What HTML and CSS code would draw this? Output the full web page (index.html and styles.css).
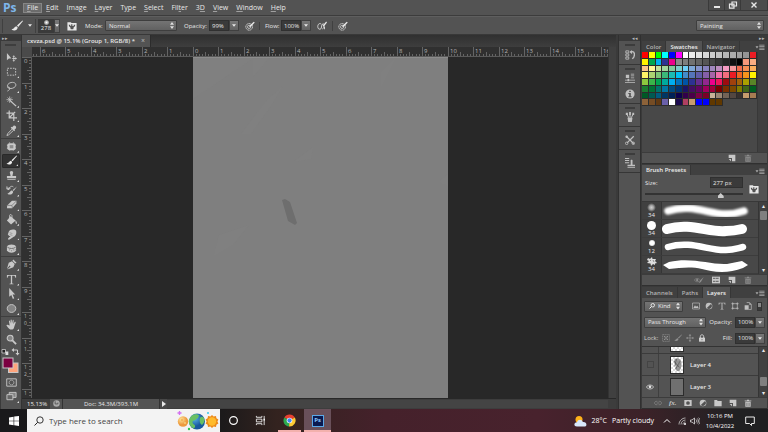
FILE: index.html
```html
<!DOCTYPE html>
<html lang="en">
<head>
<meta charset="utf-8">
<title>cxvza.psd</title>
<link rel="stylesheet" href="styles.css">
</head>
<body>
<svg class="sprite" aria-hidden="true">
  <symbol id="brush" viewBox="0 0 12 12"><path d="M11.5.6 6 5.6 7.2 6.9 12 1zM5.4 6.2C3.6 6.4 3.4 8.600.5 9.400 3 11.400 6.300 10.500 6.700 7.500z"/></symbol>
  <symbol id="pressure" viewBox="0 0 12 12"><circle cx="5" cy="7" r="4" fill="none" stroke="currentColor" stroke-dasharray="1.500 .5"/><circle cx="5" cy="7" r="2" fill="none" stroke="currentColor" stroke-width=".8"/><path d="m5 7.500.6-2L10.500.8l1.200 1.100L7 6.800z"/></symbol>
  <symbol id="airbrush" viewBox="0 0 12 12"><path d="M5 3.500C2 2 .6 5 1 7.500c.3 2.500 2.500 3 4 1.500M5 9l1-5 2.500-.5M6.500 9.500C8 9 8.500 7.500 8.500 5.500" fill="none" stroke="currentColor"/><path d="m7 5.500 4-4.800 1 1L8 6.800zM8.500 7h1v3h-1z"/></symbol>
  <symbol id="folderbrush" viewBox="0 0 12 12"><path fill-rule="evenodd" d="M.5 1.500h4l1 1h6v9h-11zM2 4.500h2V6h1V3.800h1.500V6H8V4.500h2L9.300 7h-1l-.8 3h-3l-.8-3h-1z"/></symbol>
  <symbol id="move" viewBox="0 0 12 12"><path d="M1 1v8l2.200-2H6zM8.500 3.500 10 5.200H9v1.300h1.200v-1L12 7l-1.800 1.500v-1H9V9h1l-1.500 1.700L7 9h1V7.500H6.800v-1H8V5.200H7z"/></symbol>
  <symbol id="marquee" viewBox="0 0 12 12"><path d="M1.500 2.500h9v7.500h-9z" fill="none" stroke="currentColor" stroke-dasharray="1.800 1.200"/></symbol>
  <symbol id="lasso" viewBox="0 0 12 12"><path d="M3 8C-.5 5 3 1.500 7 1.500S12 5 9 7C7 8.500 3.500 8.500 2.500 7.500S3.500 6 4 7.500 3.500 10 1.500 11" fill="none" stroke="currentColor"/></symbol>
  <symbol id="wand" viewBox="0 0 12 12"><path d="m5 4.500 6.500 6-1 1L4 5.500z"/><path d="M4 .5v7M.5 4h7M1.700 1.700l4.600 4.600M6.300 1.700 1.700 6.300" stroke="currentColor" stroke-width=".8"/></symbol>
  <symbol id="crop" viewBox="0 0 12 12"><path d="M3.500.5v8H12M.5 3.500h8V12M3.500 8.500 10 2" fill="none" stroke="currentColor" stroke-width="1.300"/></symbol>
  <symbol id="eyedrop" viewBox="0 0 12 12"><path d="M8 1c1.500-1.500 4 1 2.700 2.700L9.300 5l.6.7-1 1-3.800-3.800 1-1 .6.6z"/><path d="m6.500 4.500-4.700 5-.8 2 2-.8 5-4.700" fill="none" stroke="currentColor"/></symbol>
  <symbol id="heal" viewBox="0 0 12 12"><rect x="1.500" y="2.500" width="9" height="7.500" rx="2"/><path d="M1 4.500h10M1 7.800h10M4 1.500v9M8 1.500v9" stroke="currentColor" stroke-dasharray="1 .7"/><path d="M4 4.500h4v3.500H4z" fill="#8b8b8b"/></symbol>
  <symbol id="stamp" viewBox="0 0 12 12"><path d="M4.500 4C2.500 0 9.500 0 7.500 4L7 6.500h4V9H1V6.500h4zM1.500 10h9v1h-9z"/></symbol>
  <symbol id="history" viewBox="0 0 12 12"><path d="M12 1.500 7.300 5.500l1 1zM6.700 6C4.500 6 4.500 8.500 1.500 9.500 4.500 11.500 7.500 10 7.800 7.300z"/><path d="M1 3.500h4M2.500 5.500C4 1 6.500 1 8 2M1 1.500v3h3" fill="none" stroke="currentColor"/></symbol>
  <symbol id="eraser" viewBox="0 0 12 12"><path d="M6.500 2h5l-.2 3-4.500 5H1l.3-3z"/><path d="M1.300 7h5.200L7 10m-.5-3 5-5" fill="none" stroke="#666" stroke-width=".7"/></symbol>
  <symbol id="bucket" viewBox="0 0 12 12"><path d="M5 2.500 10.500 7l-5 4.500L1 7zM10.500 7c2 1.500 1.300 4 .8 4s-1.300-1.500-.8-4z"/><path d="M4 6V1.500c0-1.500 3-1 2.500 1V5" fill="none" stroke="currentColor"/></symbol>
  <symbol id="smudge" viewBox="0 0 12 12"><path d="M3 3C4 0 10 0 11 2c.8 3-.5 6-2.500 6.500L4 11.500C2 12 1.500 10.500 3 9.500l2-2H3.500L2 6z"/><path d="m4 4 3 1M4 6l3 1" stroke="#777" stroke-width=".6"/></symbol>
  <symbol id="sponge" viewBox="0 0 12 12"><path d="M1 4c1-3 9-3 10 0v4c-1 3.500-9 3.500-10 0z"/><path d="M1.500 4.500c2 2 7 2 9 0" fill="none" stroke="#686868"/><path d="M4 7v1M6 8v1M8 7v1M10 7v1" stroke="#777"/></symbol>
  <symbol id="pen" viewBox="0 0 12 12"><path d="m8 .5 3.500 3.500-1.500 1L7 2zM6.500 2.500l3 3L8 9l-6.500 2.500L5 8 4 7l-3 4L3 4z"/></symbol>
  <symbol id="type" viewBox="0 0 12 12"><path d="M1 1h10v3h-.8C10 2.500 9.500 2 8 2H6.700v7.500c0 .8.300 1 1.500 1v.7H3.800v-.7c1.200 0 1.500-.2 1.500-1V2H4C2.500 2 2 2.500 1.800 4H1z"/></symbol>
  <symbol id="arrow" viewBox="0 0 12 12"><path d="M3.500 0v9.500l2.300-2L7.500 12l1.500-.7L7.200 7H10z"/></symbol>
  <symbol id="ellipse" viewBox="0 0 12 12"><ellipse cx="6" cy="6" rx="4.700" ry="4.300" fill="#858585" stroke="currentColor"/></symbol>
  <symbol id="hand" viewBox="0 0 12 12"><path d="m4 7-.8-4.500c0-1 1-1 1.200 0L5 5 5 1.300c0-1 1.200-1 1.300 0L6.500 5l.8-3.500c.2-1 1.200-.7 1.100.3L8 5.500l1.500-2.300c.6-.7 1.400 0 1 .8L9 8.500C8.500 11 7.500 11.500 6 11.500c-2 0-3-1-5.500-4.500 0-1 1-1 1.800-.5z"/></symbol>
  <symbol id="zoom" viewBox="0 0 12 12"><circle cx="4.500" cy="4.500" r="3.200" fill="#858585" stroke="currentColor" stroke-width="1.200"/><path d="m7 7 4 4" stroke="currentColor" stroke-width="2"/></symbol>
  <symbol id="mask" viewBox="0 0 12 12"><path d="M.8 2h10.400v8H.8z" fill="none" stroke="currentColor"/><circle cx="6" cy="6" r="2.600" fill="none" stroke="currentColor" stroke-dasharray="1.300 .5"/></symbol>
  <symbol id="screen" viewBox="0 0 12 12"><path d="M3.500 1.500H11V7H3.500z" fill="#858585" stroke="currentColor"/><path d="M1 4h6.500v5.500H1z" fill="#666" stroke="currentColor"/></symbol>
  <symbol id="actions" viewBox="0 0 12 12"><path d="M1 1h3.500v2.500H1zM1 4.700h3.500v2.500H1zM1 8.500h3.500V11H1z" fill="none" stroke="currentColor"/><path d="M6.500 2h2.200c3.500 0 3.500 6 0 8.500" fill="none" stroke="currentColor" stroke-width="1.600"/><path d="M8.500 0v5L5.500 2.300z"/></symbol>
  <symbol id="props" viewBox="0 0 12 12"><path d="M1 2h4v4H1zM7 .8h4v1H7zM7 3h4v1H7zM7 5.300h4v1H7zM0 8h12v1H0zM3 7h2v3H3zM0 10.800h12v1H0z"/></symbol>
  <symbol id="info" viewBox="0 0 12 12"><circle cx="6" cy="6" r="5.500"/><path d="M5 2h2v1.700H5zM4 4.800h3v4h1v1H4v-1h1V6H4z" fill="#535353"/></symbol>
  <symbol id="cup" viewBox="0 0 12 12"><path d="M3 7h6l-.8 5H3.800z"/><path d="M4.500 7 2 2M6 7V.5M7.500 7 10 2" stroke="currentColor" stroke-width="1.200"/><path d="M1 1h2.500v2.500H1zM5 0h2v3.500H5zM8.800 1H11v2.500H8.800z"/></symbol>
  <symbol id="tools" viewBox="0 0 12 12"><path d="m1.500 1.500 9 9m-8-1 8-8" stroke="currentColor" stroke-width="1.500"/><circle cx="2" cy="2" r="1.500"/><circle cx="2" cy="10" r="1.500" fill="none" stroke="currentColor"/><circle cx="10" cy="10" r="1.500" fill="none" stroke="currentColor"/></symbol>
  <symbol id="stamps" viewBox="0 0 12 12"><path d="M0 0h5v1.200H0zM0 2.500h5v1.200H0zM0 5h5v1.200H0zM6.800 4c-1-2.500 3.200-2.500 2.200 0v4H12v2H3V8h3.800zM3 11h9v1H3z"/></symbol>
  <symbol id="new" viewBox="0 0 12 12"><path fill-rule="evenodd" d="M1 1h10v10H6V6H1zM1 7.500h3.500V11z"/></symbol>
  <symbol id="trash" viewBox="0 0 12 12"><path d="M1 2.200h3.500V1h3v1.200H11v1.300H1zM2 4.300h8v7.200H2z"/><path d="M4 5.500v5M6 5.500v5M8 5.500v5" stroke="#535353" stroke-width=".7"/></symbol>
  <symbol id="eye" viewBox="0 0 12 12"><path d="M.5 6C3 2 9 2 11.500 6 9 10 3 10 .5 6z" fill="none" stroke="currentColor"/><circle cx="6" cy="5.800" r="2"/></symbol>
  <symbol id="eyebrush" viewBox="0 0 16 12"><path d="M.5 6C3 3 6 3 9 5M.5 6C3 9 5 9.500 8 8" fill="none" stroke="currentColor"/><circle cx="5" cy="6" r="1.800"/><path d="M15.500 1 10 6.500 7 11l4-2z"/></symbol>
  <symbol id="grid" viewBox="0 0 12 12"><path d="M0 1h12v10H0z"/><path d="M2 3.500h3M6.500 3.500H10M2 8h3M6.500 8H10" stroke="#484848" stroke-width="2" stroke-dasharray="1.300 .5"/></symbol>
  <symbol id="image" viewBox="0 0 12 12"><path d="M.8 1.500h10.400v9H.8z" fill="none" stroke="currentColor"/><path d="m2 9 2.500-4L6 7l2-1.500L10 9z"/></symbol>
  <symbol id="adjust" viewBox="0 0 12 12"><circle cx="6" cy="6" r="5"/><path d="M2.700 9A4.200 4.200 0 0 0 9 3z" fill="#535353"/></symbol>
  <symbol id="shape" viewBox="0 0 12 12"><path d="M2.500 2.500h7v7h-7zM.5 2.500H4M2.500.5V4M8 2.500h3.500M9.500.5V4M.5 9.500H4M2.500 8v3.500M8 9.500h3.500M9.500 8v3.500" fill="none" stroke="currentColor"/></symbol>
  <symbol id="smart" viewBox="0 0 12 12"><path d="M4 .8h4.500L11 3.500v7.700H7" fill="none" stroke="currentColor"/><path d="M1 5h6v6.500H1zM8 1v3h3z"/></symbol>
  <symbol id="checker" viewBox="0 0 12 12"><path d="M1 1h10v10H1z" fill="none" stroke="currentColor" stroke-dasharray="2 .8"/><path d="M3 3h2v2H3zM7 3h2v2H7zM5 5h2v2H5zM3 7h2v2H3zM7 7h2v2H7z"/></symbol>
  <symbol id="cross" viewBox="0 0 12 12"><path d="M6 1v10M1 6h10" stroke="currentColor"/><path d="m6 0 2 2.500H4zM6 12l2-2.500H4zM0 6l2.500-2v4zM12 6 9.500 4v4z"/></symbol>
  <symbol id="lock" viewBox="0 0 12 12"><path d="M1.500 5.500h9v6h-9z"/><path d="M3.500 6V3.500c0-3 5-3 5 0V6" fill="none" stroke="currentColor" stroke-width="1.500"/><path d="M5.500 7.500h1v2h-1z" fill="#555"/></symbol>
  <symbol id="link" viewBox="0 0 12 12"><path d="M5 3.500H3.500c-3.500 0-3.500 5 0 5H5M7 3.500h1.500c3.500 0 3.500 5 0 5H7M4 6h4" fill="none" stroke="currentColor"/></symbol>
  <symbol id="layermask" viewBox="0 0 12 12"><path fill-rule="evenodd" d="M.5 1.500h11v9H.5zM6 3.200a2.800 2.800 0 1 0 0 5.600 2.800 2.800 0 1 0 0-5.600z"/></symbol>
  <symbol id="folder" viewBox="0 0 12 12"><path d="M.5 1.500h4l1 1.500h6v8H.5z"/></symbol>
  <symbol id="search" viewBox="0 0 12 12"><circle cx="7.500" cy="4.500" r="3.500" fill="none" stroke="currentColor" stroke-width="1.800"/><path d="M5 7 1 11" stroke="currentColor" stroke-width="2"/></symbol>
  <symbol id="menu" viewBox="0 0 12 8"><path d="M0 3h4L2 6zM5 1h7v1H5zM5 3h7v1H5zM5 5h7v1H5zM5 7h7v1H5z"/></symbol>
  <symbol id="down" viewBox="0 0 6 4"><path d="M0 0h6L3 4z"/></symbol>
</svg>

<div class="app">
  <header class="menubar">
    <span class="logo">Ps</span>
    <nav class="menus">
      <button class="menu active"><u>F</u>ile</button><button class="menu"><u>E</u>dit</button><button class="menu"><u>I</u>mage</button><button class="menu"><u>L</u>ayer</button><button class="menu">T<u>y</u>pe</button><button class="menu"><u>S</u>elect</button><button class="menu">Fil<u>t</u>er</button><button class="menu">3<u>D</u></button><button class="menu"><u>V</u>iew</button><button class="menu"><u>W</u>indow</button><button class="menu"><u>H</u>elp</button>
    </nav>
    <div class="winctl">
      <button aria-label="Minimize"><svg viewBox="0 0 10 8"><path d="M2 5h6v2H2z"/></svg></button>
      <button aria-label="Restore"><svg viewBox="0 0 10 8"><path d="M4 1h4.500v4H4zM1.500 3.200H6v4H1.500z" fill="none" stroke="currentColor" stroke-width="1.200"/></svg></button>
      <button aria-label="Close"><svg viewBox="0 0 10 8"><path d="m2.500 1.500 5 5m0-5-5 5" stroke="currentColor" stroke-width="1.400"/></svg></button>
    </div>
  </header>

  <div class="options">
    <button class="toolbtn" aria-label="Brush tool"><svg class="ico12"><use href="#brush"/></svg><svg class="caret"><use href="#down"/></svg></button>
    <div class="preset"><span class="dot"></span><span>278</span></div><button class="drop preset-drop" aria-label="Brush preset picker"><svg class="caret"><use href="#down"/></svg></button>
    <button class="bare" aria-label="Brush panel"><svg class="ico10"><use href="#folderbrush"/></svg></button>
    <label class="mode-label" for="mode">Mode:</label>
    <span class="pick mode"><select id="mode"><option>Normal</option></select></span>
    <label class="opacity-label" for="opacity">Opacity:</label>
    <input class="num" id="opacity" value="99%"><button class="drop" aria-label="Opacity slider"><svg class="caret"><use href="#down"/></svg></button>
    <button class="bare press" aria-label="Pressure for opacity"><svg class="ico10"><use href="#pressure"/></svg></button>
    <label class="flow-label" for="flow">Flow:</label>
    <input class="num" id="flow" value="100%"><button class="drop" aria-label="Flow slider"><svg class="caret"><use href="#down"/></svg></button>
    <button class="bare press" aria-label="Airbrush"><svg class="ico10"><use href="#airbrush"/></svg></button>
    <button class="bare size-press" aria-label="Pressure for size"><svg class="ico10"><use href="#pressure"/></svg></button>
    <span class="pick workspace-pick"><select aria-label="Workspace"><option>Painting</option></select></span>
  </div>

  <main class="workspace">
    <aside class="toolbox">
      <div class="collapse">▸▸</div>
      <div class="tools">
        <div class="grip"></div>
        <div class="group six"><button aria-label="Move"><svg><use href="#move"/></svg></button><button class="more" aria-label="Marquee"><svg><use href="#marquee"/></svg></button><button class="more" aria-label="Lasso"><svg><use href="#lasso"/></svg></button><button class="more" aria-label="Magic wand"><svg><use href="#wand"/></svg></button><button class="more" aria-label="Crop"><svg><use href="#crop"/></svg></button><button class="more" aria-label="Eyedropper"><svg><use href="#eyedrop"/></svg></button></div>
        <div class="group eight"><button class="more" aria-label="Heal"><svg><use href="#heal"/></svg></button><button class="more selected" aria-label="Brush"><svg><use href="#brush"/></svg></button><button class="more" aria-label="Stamp"><svg><use href="#stamp"/></svg></button><button class="more" aria-label="History brush"><svg><use href="#history"/></svg></button><button class="more" aria-label="Eraser"><svg><use href="#eraser"/></svg></button><button class="more" aria-label="Paint bucket"><svg><use href="#bucket"/></svg></button><button class="more" aria-label="Smudge"><svg><use href="#smudge"/></svg></button><button class="more" aria-label="Sponge"><svg><use href="#sponge"/></svg></button></div>
        <div class="group four"><button class="more" aria-label="Pen"><svg><use href="#pen"/></svg></button><button class="more" aria-label="Type"><svg><use href="#type"/></svg></button><button class="more" aria-label="Path selection"><svg><use href="#arrow"/></svg></button><button class="more" aria-label="Ellipse"><svg><use href="#ellipse"/></svg></button></div>
        <div class="group two"><button class="more" aria-label="Hand"><svg><use href="#hand"/></svg></button><button aria-label="Zoom"><svg><use href="#zoom"/></svg></button></div>
        <svg class="colors" viewBox="0 0 20 28">
          <path d="M1 2.500h3.500V6H1z" fill="#222" stroke="#ccc" stroke-width=".8"/><path d="M4.500 4.500h2.800V8H4.500z" fill="#ddd"/>
          <path d="M12.500 3h4v4" fill="none" stroke="#ccc"/><path d="m13 1v4l-2.500-2zM14.500 6h4l-2 2.500z" fill="#ccc"/>
          <rect x="7.500" y="16" width="9.500" height="9.500" fill="#ffa47c" stroke="#c8c8c8"/>
          <rect x="2" y="11" width="10" height="10" fill="#7b0040" stroke="#c8c8c8"/>
        </svg>
        <div class="group last"><button aria-label="Quick mask"><svg><use href="#mask"/></svg></button><button class="more" aria-label="Screen mode"><svg><use href="#screen"/></svg></button></div>
      </div>
    </aside>

    <section class="document">
      <div class="doctabs"><button class="doctab">cxvza.psd @ 15.1% (Group 1, RGB/8) * <span class="x">×</span></button></div>
      <div class="view">
        <div class="corner"></div>
        <svg class="ruler top" id="ruler-top"></svg>
        <svg class="ruler left" id="ruler-left"></svg>
        <div class="pasteboard" id="pasteboard">
          <svg class="canvas" id="canvas" viewBox="0 0 255 341" preserveAspectRatio="none">
            <path d="M0 0h255v341H0z" fill="#7f7f7f"/>
            <path d="M0 42 62 0H0zM60 20l17-20-17 2zM48 77l24-32 18-16-12 20-20 28zM188 30l15-30-15 15zM245 125l10-8v12zM26 178l30-10-16 20-20 12zM100 105l20-15-2 12z" fill="#828282" opacity=".5"/>
            <path d="m89 143 3-1 5 3 7 21-2 2-7-4z" fill="#6e6e6e"/>
            <path d="M0 .5h255" stroke="#8c8c8c"/>
          </svg>
        </div>
        <div class="vscroll"></div>
      </div>
      <footer class="status"><span class="pct">15.13%</span><span class="stico"><svg viewBox="0 0 10 10"><circle cx="5" cy="5" r="3.600"/><path d="M3.500 2.500v3h3V4" fill="none" stroke="#555"/></svg></span><span class="docsize">Doc: 34.3M/393.1M</span><button class="play" aria-label="Status menu"><svg viewBox="0 0 6 6"><path d="M1 0v6l4-3z"/></svg></button><span class="track"></span></footer>
    </section>

    <aside class="dock">
      <div class="collapse right">◂◂</div>
      <div class="dockgroup one"><button aria-label="History"><svg><use href="#actions"/></svg></button></div>
      <div class="dockgroup pair"><button aria-label="Properties"><svg><use href="#props"/></svg></button><button aria-label="Info"><svg><use href="#info"/></svg></button></div>
      <div class="dockgroup"><button aria-label="Brush"><svg><use href="#cup"/></svg></button></div>
      <div class="dockgroup"><button aria-label="Tool presets"><svg><use href="#tools"/></svg></button></div>
      <div class="dockgroup"><button aria-label="Clone source"><svg><use href="#stamps"/></svg></button></div>
      <div class="dockrest"></div>
    </aside>

    <aside class="panels">
      <div class="collapse right">▸▸</div>
      <section class="panel swatch-panel">
        <div class="tabs"><button>Color</button><button class="on">Swatches</button><button>Navigator</button><svg class="pm"><use href="#menu"/></svg></div>
        <div class="swatch-body"><div class="swatches" id="swatches"></div><div class="bar"></div></div>
        <div class="foot"><svg class="ico8"><use href="#new"/></svg><svg class="ico8 dim"><use href="#trash"/></svg></div>
      </section>
      <section class="panel brush-panel">
        <div class="tabs"><button class="on">Brush Presets</button><svg class="pm"><use href="#menu"/></svg></div>
        <div class="size">
          <label for="size">Size:</label><input class="num" id="size" value="277 px">
          <button class="bare" aria-label="Brush panel"><svg class="ico10"><use href="#folderbrush"/></svg></button>
          <input class="slider" type="range" min="0" max="100" value="79" aria-label="Brush size">
        </div>
        <div class="brushlist">
          <div class="brushes">
            <div class="brushrow"><div class="tip"><span class="soft"></span>34</div><svg class="stroke" viewBox="0 0 90 18"><defs><filter id="soften" x="-10%" y="-40%" width="120%" height="180%"><feGaussianBlur stdDeviation="1.200"/></filter></defs><path d="M6 9C30 1 48 13 65 12c8 0 14-2 17-3" fill="none" stroke="#fff" stroke-width="7.500" stroke-linecap="round" filter="url(#soften)"/></svg></div>
            <div class="brushrow"><div class="tip"><span class="hard"></span>34</div><svg class="stroke" viewBox="0 0 90 18"><path d="M5 9C29 2 47 13 64 11c8 0 12-1 16-2" fill="none" stroke="#fff" stroke-width="10" stroke-linecap="round"/></svg></div>
            <div class="brushrow"><div class="tip"><span class="small"></span>12</div><svg class="stroke" viewBox="0 0 90 18"><path d="M6 9C29 2 47 13 64 12c8 0 12-2 17-3" fill="none" stroke="#fff" stroke-width="6.500" stroke-linecap="round"/></svg></div>
            <div class="brushrow"><div class="tip"><svg class="splat" viewBox="0 0 10 9"><path d="m1 1 2 1 2-2 .5 2L9 2 8 4l2 2-2 .5L8 8 6 7 4 9 3.500 6.500 0 6l2-2L0 3z" fill="#ddd"/><path d="m3 3 1 1m2-1 1 2" stroke="#555" stroke-width=".6"/></svg>34</div><svg class="stroke" viewBox="0 0 90 18"><path d="m1 9 6-3C30 1 48 9 65 8l15-3 6 4-5 3C66 18 50 16 40 13 28 10 18 12 7 13z" fill="#fff"/></svg></div>
          </div>
          <div class="scroll"><span class="up">▴</span><span class="thumb"></span><span class="dn">▾</span></div>
        </div>
        <div class="foot"><svg class="ico10 dim"><use href="#eyebrush"/></svg><svg class="ico8"><use href="#grid"/></svg><svg class="ico8"><use href="#new"/></svg><svg class="ico8 dim"><use href="#trash"/></svg></div>
      </section>
      <section class="panel layer-panel">
        <div class="tabs"><button>Channels</button><button>Paths</button><button class="on">Layers</button><svg class="pm"><use href="#menu"/></svg></div>
        <div class="filterrow">
          <span class="pick kind"><svg class="search"><use href="#search"/></svg><select aria-label="Filter layers by"><option>Kind</option></select></span>
          <svg class="ico8"><use href="#image"/></svg><svg class="ico8"><use href="#adjust"/></svg><svg class="ico8"><use href="#type"/></svg><svg class="ico8"><use href="#shape"/></svg><svg class="ico8"><use href="#smart"/></svg><span class="switch"></span>
        </div>
        <div class="blendrow">
          <span class="pick blend"><select aria-label="Blend mode"><option>Pass Through</option></select></span>
          <label for="lopacity">Opacity:</label><input class="num" id="lopacity" value="100%"><button class="drop" aria-label="Layer opacity slider"><svg class="caret"><use href="#down"/></svg></button>
        </div>
        <div class="lockrow">
          <span class="locks"><span>Lock:</span><svg class="ico8 dim"><use href="#checker"/></svg><svg class="ico8 dim"><use href="#brush"/></svg><svg class="ico8 dim"><use href="#cross"/></svg><svg class="ico8"><use href="#lock"/></svg></span>
          <label for="fill">Fill:</label><input class="num" id="fill" value="100%"><button class="drop" aria-label="Fill slider"><svg class="caret"><use href="#down"/></svg></button>
        </div>
        <div class="layerlist">
          <div class="layers">
            <div class="layer cut"><span class="vis"><i></i></span><span class="thumbnail checks"></span><span class="name">Layer 5</span></div>
            <div class="layer"><span class="vis"><i></i></span><span class="thumbnail checks"><svg viewBox="0 0 13 17"><path d="M4 2c3-2 6 0 7 3s0 8-2 10c-3 1-5-2-4-4S2 7 4 2z" fill="#777" opacity=".75"/><path d="m3 4 6 7M5 13l5-9M6 2l-2 8" stroke="#444" stroke-width=".6"/></svg></span><span class="name">Layer 4</span></div>
            <div class="layer"><span class="vis"><svg class="ico8"><use href="#eye"/></svg></span><span class="thumbnail plain"></span><span class="name">Layer 3</span></div>
          </div>
          <div class="scroll low"><span class="up">▴</span><span class="thumb"></span><span class="dn">▾</span></div>
        </div>
        <div class="foot layerfoot"><svg class="ico8 dim"><use href="#link"/></svg><span class="fx">fx.</span><svg class="ico8"><use href="#layermask"/></svg><svg class="ico8"><use href="#adjust"/></svg><svg class="ico8"><use href="#folder"/></svg><svg class="ico8"><use href="#new"/></svg><svg class="ico8"><use href="#trash"/></svg></div>
      </section>
    </aside>
  </main>

  <footer class="taskbar">
    <button class="start" aria-label="Start"><svg viewBox="0 0 10 10"><path d="M0 1.400 4.600.7v4H0zM5.200.6 10 0v4.700H5.200zM0 5.300h4.600v4L0 8.600zM5.200 5.300H10V10l-4.800-.7z"/></svg></button>
    <div class="find">
      <svg class="glass" viewBox="0 0 10 10"><circle cx="6" cy="4" r="3.200" fill="none" stroke="#222" stroke-width=".9"/><path d="M3.700 6.300.5 9.500" stroke="#222"/></svg>
      <input aria-label="Search" placeholder="Type here to search">
      <svg class="planets" viewBox="0 0 42 20">
        <defs><radialGradient id="earth" cx=".35" cy=".3"><stop offset="0" stop-color="#58b6e8"/><stop offset="1" stop-color="#19599f"/></radialGradient><radialGradient id="moon" cx=".35" cy=".3"><stop offset="0" stop-color="#ffe59a"/><stop offset="1" stop-color="#ed9a3e"/></radialGradient></defs>
        <circle cx="6" cy="10.500" r="5.200" fill="url(#moon)"/><circle cx="5" cy="9" r="1.200" fill="#f3b65b"/><circle cx="8" cy="12" r="1" fill="#f9cf77"/>
        <path d="m35 4 1.600 1.500L39 5l.4 2.300 2 1.200-1 2 1 2-2 1.300L39 16l-2.400-.5L35 17l-1.600-1.500L31 16l-.4-2.300-2-1.200 1-2-1-2 2-1.200L31 5l2.400.5z" fill="#ed8a19"/><circle cx="35" cy="10.500" r="4.200" fill="#ffbb2c"/>
        <circle cx="20" cy="10.500" r="8" fill="url(#earth)"/><path d="M14 5.500c3-3.500 7-2.500 8-1-1 1 0 2-2 3s-1 2-3 2-2 3 0 4c2 1 1 3 0 4-4-1.500-6-6-5-9zM23 7c2-2 3-1 4 0 1 3 0 5-2 7-2-1-3-4-2-7z" fill="#68c064"/>
        <path d="M2.500 0v4M.5 2h4" stroke="#d36ef1" stroke-width="1.300"/><circle cx="31" cy="2" r="1" fill="#37c9ea"/><circle cx="12" cy="18" r="1.200" fill="#2fc64d"/>
      </svg>
    </div>
    <button class="task" aria-label="Cortana"><svg viewBox="0 0 12 12"><circle cx="6" cy="6" r="4.200" fill="none" stroke="#fff" stroke-width="1.300"/></svg></button>
    <button class="task" aria-label="Task view"><svg viewBox="0 0 12 12"><path d="M1.500 1v1.500h6V1M1.500 11V9.500h6V11M1.500 4.500h6v3h-6zM10 1v10" fill="none" stroke="#fff" stroke-width=".9"/><path d="M9.300 4h1.500v2H9.300z"/></svg></button>
    <button class="task open chrome" aria-label="Chrome"><svg viewBox="0 0 14 14"><path d="M7 7 1.400 3.700A6.500 6.500 0 0 1 12.700 3.800z" fill="#e8402f"/><path d="M7 7 1.400 3.700A6.500 6.500 0 0 0 6.500 13.500z" fill="#2da94f"/><path d="m7 7 5.700-3.200A6.500 6.500 0 0 1 6.500 13.500z" fill="#fcc934"/><circle cx="7" cy="7" r="3" fill="#fff"/><circle cx="7" cy="7" r="2.300" fill="#4285f4"/></svg></button>
    <button class="task open current" aria-label="Photoshop"><span class="pstile">Ps</span></button>
    <div class="tray">
      <svg class="weather" viewBox="0 0 13 12"><circle cx="5" cy="4.500" r="3.500" fill="#ffb219"/><path d="M3 11.500c-3.500 0-3.500-4 0-4.300C4 4 8 4 8.800 7c4-.5 5 4.500 1.500 4.500z" fill="#d9e7fa"/></svg>
      <span class="temp">28°C</span><span class="cloudy">Partly cloudy</span>
      <svg class="chev" viewBox="0 0 8 8"><path d="m1 5.500 3-3 3 3" fill="none" stroke="#fff"/></svg>
      <svg class="net" viewBox="0 0 8 8"><path d="M1 7.500C1 4 4 1 7.500 1M3 7.500C3 5 5 3 7.500 3M5 7.500C5 6 6 5 7.500 5" fill="none" stroke="#ccc" stroke-width=".8"/><circle cx="7" cy="7" r="1" fill="#fff"/></svg>
      <svg class="vol" viewBox="0 0 10 8"><path d="M.5 3H2l2.500-2v6L2 5H.5zM6 2.500c1 1 1 2 0 3M7.300 1.500c1.500 1.500 1.500 3.500 0 5M8.700.7c2 2 2 4.500 0 6.600" fill="none" stroke="#ddd" stroke-width=".8"/></svg>
      <div class="clock"><span>10:16 PM</span><span>10/4/2022</span></div>
      <svg class="note" viewBox="0 0 10 10"><path d="M.7 1h8.600v6.500H6.500V9.500l-2-2H.7z" fill="none" stroke="#fff" stroke-width=".9"/></svg>
    </div>
  </footer>
</div>
<script src="app.js"></script>
</body>
</html>
```

FILE: styles.css
```css
* { box-sizing: border-box; }
body { margin: 0; background: #282828; color: #e8e8e8; font: 6px/8px "Open Sans", "Noto Sans", sans-serif; }
button, input, select { font: inherit; color: inherit; margin: 0; padding: 0; border: 0; background: none; outline: 0; appearance: none; border-radius: 0; }
button { display: flex; align-items: center; justify-content: center; flex: none; white-space: nowrap; }
svg { display: block; flex: none; fill: currentColor; }
label { flex: none; }
.sprite { position: absolute; width: 0; height: 0; }
.app { height: 100vh; display: flex; flex-direction: column; overflow: hidden; }
.ico12 { width: 12px; height: 12px; }
.ico10 { width: 10px; height: 10px; }
.ico8 { width: 8px; height: 8px; }
.caret { width: 4px; height: 3px; }
.dim { opacity: .5; }

.menubar { display: flex; height: 16px; flex: none; background: #535353; border-bottom: 1px solid #3c3c3c; }
.logo { width: 23px; padding-left: 3px; font: 700 12px/15px "Open Sans", sans-serif; color: #7eb6ea; }
.menus { display: flex; padding: 3px 0 2px; font-size: 7px; }
.menu { padding: 0 3px; border: 1px solid transparent; }
.menu u { text-underline-offset: 1px; text-decoration-thickness: 1px; text-decoration-color: #a0a0a0; }
.menu.active { background: #6c6c6c; border-color: #868686; }
.winctl { display: flex; height: 11px; margin-left: auto; border: 1px solid #3a3a3a; border-top: 0; background: #4c4c4c; }
.winctl button { width: 16px; border-right: 1px solid #3a3a3a; }
.winctl button:last-child { width: 26px; border: 0; }
.winctl svg { width: 10px; height: 8px; }

.options { display: flex; align-items: center; height: 19px; flex: none; background: #535353; border-top: 1px solid #5e5e5e; border-bottom: 1px solid #383838; padding: 0 4px 0 2px; }
.toolbtn { width: 34px; height: 14px; gap: 5px; padding-left: 5px; border-left: 1px solid #404040; border-right: 1px solid #404040; }
.preset { display: flex; flex-direction: column; align-items: center; width: 16px; height: 14px; margin-left: 2px; background: #3a3a3a; line-height: 7px; }
.dot { width: 5px; height: 5px; margin-top: 1px; border-radius: 50%; background: radial-gradient(#fff, #999 60%, #3a3a3a); }
.drop { width: 10px; height: 11px; background: linear-gradient(#787878, #626262); border: 1px solid #404040; }
.preset-drop { width: 6px; height: 14px; }
.preset-drop + .bare { margin-left: 7px; }
.mode-label { width: 20px; margin-left: 8px; }
.pick { display: flex; align-items: center; height: 11px; flex: none; position: relative; background: linear-gradient(#747474, #616161); border: 1px solid #3e3e3e; border-radius: 1px; }
.pick::after { content: ""; position: absolute; right: 2px; width: 4px; height: 7px; background: #e0e0e0; clip-path: polygon(50% 0, 100% 40%, 0 40%, 0 60%, 100% 60%, 50% 100%, 0 60%, 0 40%); }
.pick select { width: 100%; height: 100%; padding-left: 3px; }
.pick option { background: #535353; }
.mode { width: 72px; }
.opacity-label { width: 25px; margin-left: 7px; }
.num { width: 20px; height: 11px; padding-left: 2px; background: #3a3a3a; border: 1px solid #303030; }
.press { margin-left: 6px; }
.flow-label { margin-left: 4px; padding-left: 5px; width: 22px; border-left: 1px solid #404040; }
.size-press { margin-left: 5px; padding-left: 5px; border-left: 1px solid #404040; }
.workspace-pick { width: 68px; margin-left: auto; }

.workspace { display: flex; flex: 1; min-height: 0; background: #3a3a3a; }
.collapse { height: 6px; flex: none; font-size: 5px; line-height: 6px; padding-left: 2px; color: #bbb; background: #3a3a3a; }
.collapse.right { text-align: right; padding-right: 2px; }
.toolbox { width: 22px; flex: none; display: flex; flex-direction: column; border-right: 1px solid #333; }
.tools { flex: 1; background: #535353; border-left: 1px solid #3a3a3a; }
.grip { height: 2px; margin: 3px 5px 4px 4px; background: #3e3e3e; }
.group { display: grid; grid-auto-rows: 1fr; border-bottom: 1px solid #3e3e3e; }
.six { height: 89px; }
.eight { height: 118px; }
.four { height: 60px; }
.two { height: 30px; border: 0; }
.last { height: 29px; border: 0; }
.group button { position: relative; color: #c8c8c8; margin: 0 1px; }
.group button svg { width: 11px; height: 11px; }
.more::after { content: ""; position: absolute; right: 1px; bottom: 1px; width: 2px; height: 2px; background: #ddd; clip-path: polygon(100% 0, 100% 100%, 0 100%); }
.group .selected { background: #323232; border: 1px solid #292929; border-radius: 1px; color: #eee; }
.colors { width: 20px; height: 28px; }

.document { flex: 1; min-width: 0; display: flex; flex-direction: column; padding-right: 2px; }
.doctabs { display: flex; height: 12px; flex: none; background: linear-gradient(#303030, #3e3e3e); }
.doctab { padding: 0 5px; font-weight: 600; background: #535353; border-right: 1px solid #2c2c2c; }
.x { margin-left: 6px; color: #aaa; font-size: 7px; }
.view { flex: 1; min-height: 0; display: grid; grid-template: 10px minmax(0, 1fr) / 10px minmax(0, 1fr) 8px; }
.corner { background: #4a4a4a; }
.ruler { width: 100%; height: 100%; min-height: 0; background: #303030; overflow: hidden; fill: #b4b4b4; stroke: none; font-size: 6px; }
.ruler.top { grid-column: 2 / 3; border-bottom: 1px solid #5a5a5a; }
.ruler.left { grid-column: 1; border-right: 1px solid #5a5a5a; }
.ruler .stack { font-size: 5px; }
.pasteboard { background: #282828; overflow: hidden; min-height: 0; }
.canvas { width: 255px; height: 100%; margin: 0 auto; }
.vscroll { background: #404040; border-left: 1px solid #333; grid-column: 3; grid-row: 1 / 3; }
.status { display: flex; align-items: center; height: 11px; flex: none; background: #3d3d3d; border-top: 1px solid #282828; }
.pct { width: 28px; padding-left: 5px; }
.stico { width: 13px; height: 10px; background: #535353; color: #aaa; border-right: 1px solid #333; }
.stico svg { width: 9px; height: 9px; margin: auto; }
.docsize { width: 96px; line-height: 10px; text-align: center; background: #535353; }
.play { width: 8px; height: 10px; background: #484848; border-left: 1px solid #333; }
.play svg { width: 6px; height: 6px; }
.track { flex: 1; height: 8px; margin-right: 8px; background: #444; }

.dock { width: 23px; flex: none; display: flex; flex-direction: column; border: solid #303030; border-width: 0 1px; color: #c0c0c0; }
.dockgroup { height: 23px; padding-top: 7px; background: #535353 linear-gradient(#3c3c3c, #3c3c3c) 6px 3px / 10px 2px no-repeat; border-bottom: 1px solid #363636; }
.dockgroup.one { height: 24px; padding-top: 8px; }
.dockgroup.pair { height: 39px; }
.dockgroup button { width: 100%; height: 12px; }
.dockgroup svg { width: 10px; height: 10px; }
.pair button + button { margin-top: 4px; }
.dockrest { flex: 1; background: #535353; }

.panels { width: 127px; flex: none; display: flex; flex-direction: column; padding: 0 1px; }
.panel { display: flex; flex-direction: column; background: #535353; flex: none; border-bottom: 1px solid #303030; }
.tabs { display: flex; height: 11px; flex: none; background: #404040; color: #b4b4b4; }
.tabs button { padding: 0 4px; border-right: 1px solid #363636; font-weight: 600; }
.tabs .on { background: #535353; color: #eee; }
.pm { width: 10px; height: 6px; margin: 3px 2px 0 auto; color: #aaa; }
.foot { display: flex; align-items: center; justify-content: flex-end; gap: 8px; height: 11px; padding-right: 15px; border-top: 1px solid #3c3c3c; color: #c8c8c8; flex: none; }
.swatch-panel { height: 123px; margin-bottom: 1px; }
.swatch-body { flex: 1; display: flex; align-items: flex-start; background: #484848; }
.swatches { display: grid; grid-template-columns: repeat(17, 1fr); grid-auto-rows: 1fr; width: 115px; height: 54px; }
.swatches i { border: solid #2c2c2c; border-width: 0 1px 1px 0; }
.bar { align-self: stretch; flex: 1; background: #404040; border-left: 1px solid #383838; }
.brush-panel { height: 121px; margin-bottom: 1px; }
.brush-panel .tabs { height: 10px; }
.size { display: grid; grid-template: 11px 12px / 65px 33px 1fr; height: 26px; padding: 2px 3px 0; flex: none; align-items: center; }
.size .num { width: 33px; }
.size .bare { grid-column: 3; grid-row: 1 / 3; }
.slider { grid-column: 1 / 3; grid-row: 2; width: 100%; height: 8px; background: linear-gradient(#333, #333) 0 3px / 100% 2px no-repeat; }
.slider::-webkit-slider-thumb { appearance: none; width: 6px; height: 5px; margin-top: 3px; background: #ccc; clip-path: polygon(50% 0, 100% 60%, 100% 100%, 0 100%, 0 60%); }
.brushlist { flex: 1; min-height: 0; display: flex; overflow: hidden; border-top: 1px solid #383838; }
.brushes { flex: 1; min-width: 0; }
.brushrow { display: flex; height: 18px; background: #484848; border-bottom: 1px solid #3c3c3c; }
.tip { width: 20px; display: flex; flex-direction: column; align-items: center; justify-content: flex-end; line-height: 7px; background: #404040; border-right: 1px solid #353535; }
.hard, .soft, .small { width: 9px; height: 9px; border-radius: 50%; background: #fff; flex: none; }
.soft { background: radial-gradient(#ccc, #aaa 30%, transparent 70%); }
.small { width: 6px; height: 6px; background: radial-gradient(#fff 40%, #aaa); margin-bottom: 2px; }
.splat { width: 10px; height: 9px; }
.stroke { width: 90px; height: 18px; }
.scroll { width: 9px; flex: none; display: flex; flex-direction: column; align-items: center; background: #414141; border-left: 1px solid #353535; line-height: 8px; }
.thumb { width: 7px; height: 9px; margin-top: 1px; background: #808080; border-radius: 1px; }
.dn { margin-top: auto; }
.low .thumb { margin-top: 23px; }
.low { line-height: 7px; }

.layer-panel { flex: 1; min-height: 0; }
.filterrow, .blendrow, .lockrow { display: flex; align-items: center; height: 16px; flex: none; padding: 0 2px; }
.filterrow { gap: 5px; color: #c0c0c0; }
.kind { width: 39px; margin-right: 4px; color: #eee; }
.search { width: 6px; height: 6px; margin-left: 4px; }
.switch { width: 5px; height: 9px; background: linear-gradient(#888 50%, #3a3a3a 50%); border: 1px solid #333; }
.blend { width: 62px; }
.blendrow label, .lockrow label { flex: 1; text-align: right; padding-right: 3px; }
.locks { display: flex; align-items: center; gap: 4px; color: #d0d0d0; }
.layerlist { flex: 1; min-height: 0; display: flex; overflow: hidden; border-top: 1px solid #333; }
.layers { flex: 1; display: flex; flex-direction: column; justify-content: flex-end; min-width: 0; }
.layer { display: flex; align-items: center; height: 22px; flex: none; border-top: 1px solid #3b3b3b; }
.vis { display: flex; align-items: center; justify-content: center; width: 17px; height: 100%; border-right: 1px solid #3f3f3f; }
.vis i { width: 7px; height: 7px; border: 1px solid #444; }
.thumbnail { width: 14px; height: 18px; margin: 0 6px 0 11px; border: 1px solid #2c2c2c; }
.thumbnail svg { width: 12px; height: 16px; }
.checks { background: repeating-conic-gradient(#ddd 0 25%, #fff 0 50%) 0 0 / 4px 4px; }
.plain { background: #707070; }
.name { font-weight: 600; }
.layerfoot { gap: 7px; }
.fx { font: italic 700 7px/8px "Liberation Serif", serif; width: 8px; }

.taskbar { display: flex; height: 23px; flex: none; color: #fff; background: linear-gradient(90deg, #19191b 0, #1c1a1b 29%, #33231f 36%, #45212b 50%, #48222d 70%, #3b2228 84%, #202022 96%); }
.start { width: 27px; }
.start svg { width: 10px; height: 10px; }
.find { width: 193px; display: flex; align-items: center; background: #f3f3f3; flex: none; color: #333; padding: 0 1px 0 7px; }
.glass { width: 10px; height: 10px; margin-right: 5px; }
.find input { flex: 1; min-width: 0; font-size: 8px; line-height: 12px; }
.find input::placeholder { color: #444; opacity: 1; }
.planets { width: 42px; height: 20px; }
.task { width: 27px; }
.task svg { width: 11px; height: 11px; }
.open { border-bottom: 2px solid #f3b1ad; padding-top: 2px; }
.chrome { width: 23px; margin: 0 3px 0 4px; }
.task.chrome svg { width: 13px; height: 13px; }
.current { background: #69505a; }
.pstile { width: 12px; height: 12px; background: #0a1a50; border: 1px solid #5ba9e8; color: #8bc7ff; font: 700 6px/9px "Open Sans", sans-serif; text-align: center; }
.tray { display: flex; align-items: center; margin-left: auto; padding-right: 13px; }
.weather { width: 13px; height: 12px; }
.temp, .cloudy { font-size: 7px; margin-left: 5px; }
.chev { width: 8px; height: 8px; margin-left: 9px; }
.net { width: 8px; height: 8px; margin-left: 7px; }
.vol { width: 10px; height: 8px; margin-left: 4px; }
.clock { display: flex; flex-direction: column; align-items: center; width: 32px; margin-left: 4px; font-size: 6px; line-height: 10px; }
.note { width: 10px; height: 10px; margin-left: 9px; }
```

FILE: app.js
```js
const rows = [
  "ff0000 ffff00 00ff00 00ffff 0000ff ff00ff ffffff ebebeb e1e1e1 d7d7d7 cccccc c2c2c2 b7b7b7 acacac a0a0a0 959595 ed1c24",
  "fff200 00a651 00aeef 2e3192 ec008c 898989 7d7d7d 707070 626262 555555 464646 363636 262626 111111 000000 f7977a f9ad81",
  "fdc68a fff79a c4df9b a2d39c 82ca9d 7bcdc8 6ecff6 7ea7d8 8493ca 8882be a187be bc8dbf f49ac2 f6989d f26c4f f68e55 fbaf5c",
  "fff467 acd372 7cc576 3bb878 1abbb4 00bff3 438cca 5574b9 605ca8 855fa8 a763a8 f06ea9 f26d7d ed1c24 f26522 f7941d fff200",
  "8dc73f 39b54a 00a651 00a99d 00aeef 0072bc 0054a6 2e3192 662d91 92278f ec008c ed145b 9e0b0f a0410d a36209 aba000 598527",
  "1a7b30 007236 00746b 0076a3 004b80 003471 1b1464 440e62 630460 9e005d 9e0039 790000 7b2e00 7d4900 827b00 406618 005e20",
  "005826 005952 005b7f 003663 002157 0d004c 32004b 4b0049 7b0046 7a0026 c7b299 998675 736357 534741 37302d c69c6d a67c52",
  "8c6239 754c24 603913 6a60a9 ffffff 1b0a4f b03f62 c79b70 0000ff 0000ff 603800 603800"
];
document.getElementById("swatches").innerHTML =
  rows.join(" ").split(" ").map(c => `<i style="background:#${c}"></i>`).join("");

// One ruler unit is a tenth of the canvas width; each unit has eight subdivisions.
function drawRulers() {
  const board = document.getElementById("pasteboard").getBoundingClientRect();
  const canvas = document.getElementById("canvas").getBoundingClientRect();
  const unit = canvas.width / 10;
  const draw = (id, length, zero, vertical) => {
    let marks = "";
    for (let k = Math.floor(-zero / unit) * 8; k * unit / 8 + zero < length; k++) {
      const p = Math.round(zero + k * unit / 8);
      const size = k % 8 === 0 ? 10 : k % 4 === 0 ? 4 : 2;
      const start = 9 - size;
      marks += vertical
        ? `<rect x="${start}" y="${p}" width="${size}" height="1" opacity=".4"/>`
        : `<rect x="${p}" y="${start}" width="1" height="${size}" opacity=".4"/>`;
      if (k % 8 === 0 && p >= 0) {
        const n = String(Math.abs(k / 8));
        const cls = n.length > 1 ? "stack" : "";
        marks += vertical
          ? [...n].map((d, i) => `<text class="${cls}" x="2" y="${p + 6 + i * 7}">${d}</text>`).join("")
          : `<text x="${p + 2}" y="6">${n}</text>`;
      }
    }
    document.getElementById(id).innerHTML = marks;
  };
  draw("ruler-top", board.width, canvas.left - board.left, false);
  draw("ruler-left", board.height, canvas.top - board.top, true);
}
drawRulers();
addEventListener("resize", drawRulers);
```
